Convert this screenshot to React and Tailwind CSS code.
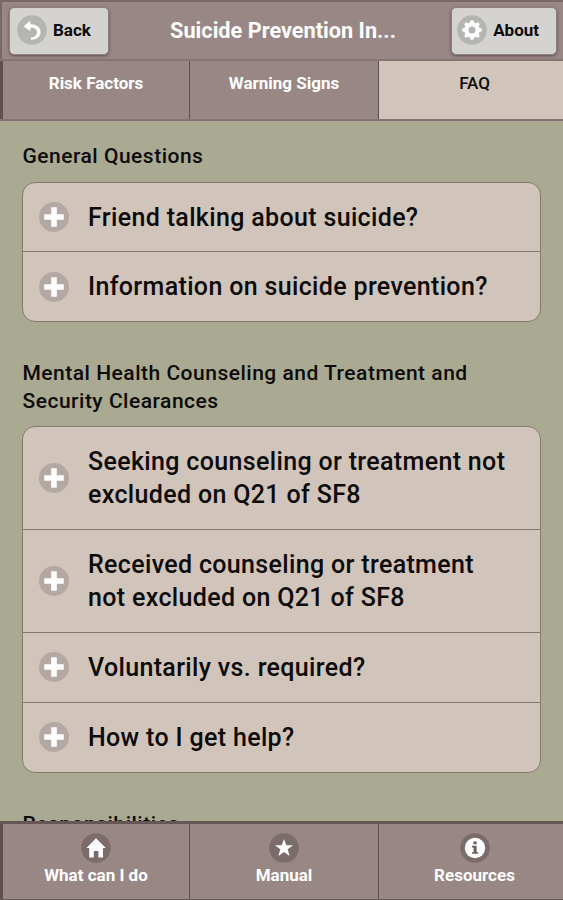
import React from 'react';

const tabs = [
  { label: 'Risk Factors', active: false },
  { label: 'Warning Signs', active: false },
  { label: 'FAQ', active: true },
];

const sections = [
  {
    title: 'General Questions',
    items: ['Friend talking about suicide?', 'Information on suicide prevention?'],
  },
  {
    title: 'Mental Health Counseling and Treatment and Security Clearances',
    items: [
      'Seeking counseling or treatment not excluded on Q21 of SF8',
      'Received counseling or treatment not excluded on Q21 of SF8',
      'Voluntarily vs. required?',
      'How to I get help?',
    ],
  },
  { title: 'Responsibilities', items: [] },
];

const BackIcon = () => (
  <svg className="w-[30px] h-[30px] shrink-0" viewBox="0 0 30 30">
    <circle cx="15" cy="15" r="14.8" fill="#b4b4b1" />
    <path d="M6.6 11.4 L13 5.8 L13.4 9.2 C19.8 9.2 23.6 12.4 23.6 17 C23.6 21.6 19.6 24.6 14 24.8 L13.6 22.6 C17.6 22.2 20 20.2 20 17.2 C20 14.2 17.6 12.6 13.4 12.8 L13.2 16 Z" fill="#fff" />
  </svg>
);

const GearIcon = () => (
  <svg className="w-[30px] h-[30px] shrink-0" viewBox="0 0 30 30">
    <circle cx="15" cy="15" r="14.8" fill="#b4b4b1" />
    <g fill="#fff">
      <circle cx="15" cy="15" r="7.8" />
      {[0, 45, 90, 135].map(angle => (
        <rect key={angle} x="13.2" y="5.2" width="3.6" height="19.6" rx="1" transform={`rotate(${angle} 15 15)`} />
      ))}
    </g>
    <circle cx="15" cy="15" r="3.6" fill="#b4b4b1" />
  </svg>
);

const PlusIcon = () => (
  <svg className="w-[30px] h-[30px] shrink-0" viewBox="0 0 30 30">
    <circle cx="15" cy="15" r="15" fill="#b3a9a2" />
    <path d="M12.2 5.2h5.6v7h7v5.6h-7v7h-5.6v-7h-7v-5.6h7z" fill="#fff" />
  </svg>
);

const HomeIcon = () => (
  <svg className="w-[30px] h-[30px]" viewBox="0 0 30 30">
    <circle cx="15" cy="15" r="14.8" fill="#7c6b6b" />
    <path d="M15 5.2 L24.8 15 H22 V24.6 H17.4 V18 H12.8 V24.6 H8.2 V15 H5.4 Z" fill="#fff" />
  </svg>
);

const StarIcon = () => (
  <svg className="w-[30px] h-[30px]" viewBox="0 0 30 30">
    <circle cx="15" cy="15" r="14.8" fill="#7c6b6b" />
    <path d="M15 6 L17.3 12.2 H24 L18.7 16.3 L20.6 23 L15 19 L9.4 23 L11.3 16.3 L6 12.2 H12.7 Z" fill="#fff" />
  </svg>
);

const InfoIcon = () => (
  <svg className="w-[30px] h-[30px]" viewBox="0 0 30 30">
    <circle cx="15" cy="15" r="14.8" fill="#7c6b6b" />
    <circle cx="15" cy="15" r="10.2" fill="#fff" />
    <path d="M13.4 8.6h3.2v2.6h-3.2z M12 12.8h4.6v6.4h1.6v1.6h-6.2v-1.6h1.6v-4.8h-1.6z" fill="#6b5d5d" />
  </svg>
);

const footerItems = [
  { label: 'What can I do', icon: <HomeIcon /> },
  { label: 'Manual', icon: <StarIcon /> },
  { label: 'Resources', icon: <InfoIcon /> },
];

const HeaderButton = ({ icon, label }) => (
  <button className="flex items-center gap-[6px] h-[48px] pl-[7px] last:pl-[5px] pr-[17px] pb-px rounded-[5px] border border-[#8b8080] bg-[#d4d3d0] text-[17px] leading-[22px] font-bold text-[#0c0c0c] shadow-[0_1px_3px_rgba(60,40,40,0.6)] whitespace-nowrap">
    {icon}
    {label}
  </button>
);

const App = () => {
  return (
    <div className="flex flex-col h-[900px] w-full overflow-hidden bg-[#a9aa91] font-['Roboto',sans-serif] text-[#0d0b09]">
      <header className="flex items-center justify-between h-[59px] shrink-0 pl-[7px] pr-[6px] bg-[#998785] border-t-2 border-l-2 border-[#7a6868]">
        <HeaderButton icon={<BackIcon />} label="Back" />
        <h1 className="pl-[6px] pt-[2px] text-[21.7px] font-bold text-white whitespace-nowrap">Suicide Prevention In...</h1>
        <HeaderButton icon={<GearIcon />} label="About" />
      </header>

      <nav className="grid grid-cols-[190px_189px_1fr] h-[62px] shrink-0 border-y-2 border-[#857473]">
        {tabs.map(tab => (
          <div
            key={tab.label}
            className={
              tab.active
                ? 'pt-[10px] pl-[7px] text-center text-[17px] font-medium bg-[#d1c4ba]'
                : 'pt-[10px] text-center text-[17px] font-bold text-white bg-[#998785] border-r border-[#5f5050] first:border-l-3'
            }
          >
            {tab.label}
          </div>
        ))}
      </nav>

      <main className="flex-1 min-h-0 overflow-hidden px-[22px] pt-[22px]">
        {sections.map(section => (
          <section key={section.title} className="mb-[38px]">
            <h2 className="mb-[11px] pl-[0.5px] text-[21px] leading-[27.5px] font-medium tracking-[0.5px]">{section.title}</h2>
            {section.items.length > 0 && (
              <ul className="rounded-[13px] border border-[#85796d] bg-[#d1c4ba] divide-y divide-[#85786e]">
                {section.items.map(item => (
                  <li key={item} className="flex items-center gap-[19px] pl-[16px] pr-[28px] py-[17px]">
                    <PlusIcon />
                    <span className="pt-[2px] text-[25px] leading-[32.9px] font-medium tracking-[0.34px]">{item}</span>
                  </li>
                ))}
              </ul>
            )}
          </section>
        ))}
      </main>

      <footer className="grid grid-cols-[190px_189px_1fr] h-[79px] shrink-0 bg-[#998785] border-t-3 border-b border-[#665656]">
        {footerItems.map(item => (
          <div
            key={item.label}
            className="flex flex-col items-center pt-[9px] text-white border-r border-[#5f5050] first:border-l-3 last:border-r-0 last:pl-[7px]"
          >
            {item.icon}
            <span className="text-[17px] leading-[24px] font-bold">{item.label}</span>
          </div>
        ))}
      </footer>
    </div>
  );
};

export default App;
